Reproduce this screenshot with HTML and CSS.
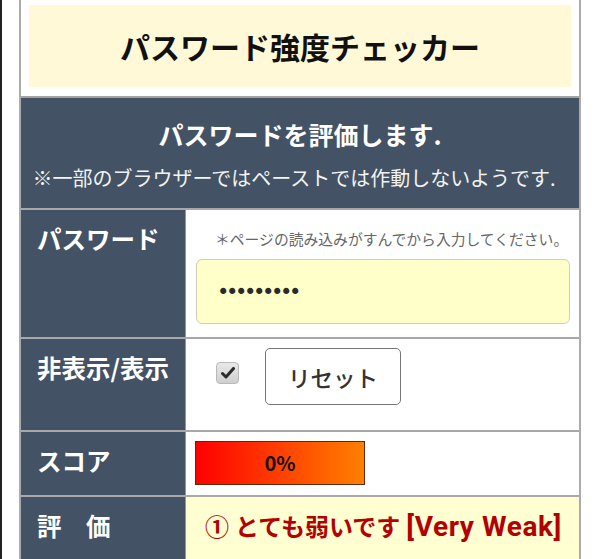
FILE: index.html
```html
<!DOCTYPE html>
<html lang="ja">
<head>
<meta charset="UTF-8">
<meta name="viewport" content="width=device-width, initial-scale=1.0">
<title>パスワード強度チェッカー</title>
<link rel="stylesheet" href="styles.css">
</head>
<body>
    <div class="checker">
        <div class="checker-head">
            <h1>パスワード強度チェッカー</h1>
        </div>
        <div class="intro">
            <h2>パスワードを評価します.</h2>
            <p>※一部のブラウザーではペーストでは作動しないようです.</p>
        </div>

        <div class="row row-pass">
            <div class="label">パスワード</div>
            <div class="cell">
                <div class="hint">＊ページの読み込みがすんでから入力してください。</div>
                <input type="password" class="pass-input" id="passInput" value="password1" autocomplete="off">
            </div>
        </div>
        <div class="row row-toggle">
            <div class="label">非表示/表示</div>
            <div class="cell">
                <span class="check" id="toggle">
                    <svg width="14" height="12" viewBox="0 0 14 12"><path d="M1.5 6.5 L5 10 L12.5 1.5" fill="none" stroke="#2b2b2b" stroke-width="3" stroke-linecap="round" stroke-linejoin="round"/></svg>
                </span>
                <button class="reset-btn" id="resetBtn">リセット</button>
            </div>
        </div>
        <div class="row row-score">
            <div class="label">スコア</div>
            <div class="cell">
                <div class="score-bar" id="scoreBar">0%</div>
            </div>
        </div>
        <div class="row row-rank">
            <div class="label">評　価</div>
            <div class="cell rank" id="rank">① とても弱いです <span class="rank-en">[Very Weak]</span></div>
        </div>
    </div>
</body>
</html>
```

FILE: styles.css
```css
body {
    margin: 0;
    min-height: 559px;
    border-left: 2px solid #222;
    background-color: #fff;
    font-family: "Noto Sans CJK JP", sans-serif;
}
.checker {
    width: 558px;
    margin-left: 17px;
    border: 2px solid #ababab;
    border-top: none;
}
.checker-head {
    padding: 5px 8px 9px;
}
.checker-head h1 {
    margin: 0;
    height: 82px;
    display: flex;
    align-items: center;
    justify-content: center;
    background-color: #fff9d7;
    color: #111;
    font-size: 30px;
    font-weight: bold;
}
.intro {
    box-sizing: border-box;
    height: 112px;
    padding-top: 18px;
    border-top: 2px solid #a3a3a3;
    background-color: #435264;
    color: #fff;
    text-align: center;
}
.intro h2 {
    margin: 0;
    font-size: 25px;
    line-height: 36px;
    font-weight: bold;
}
.intro p {
    margin: 12px 0 0;
    padding-right: 12px;
    font-size: 20px;
    line-height: 28px;
    color: #f2f2f2;
}
.row {
    display: grid;
    grid-template-columns: 164px 1fr;
    border-top: 2px solid #a8a8a8;
}
.label {
    padding: 11px 0 0 16px;
    background-color: #435264;
    color: #fff;
    font-size: 24.5px;
    font-weight: bold;
    line-height: 36px;
}
.cell {
    border-left: 1px solid #8e98a3;
    background-color: #fff;
}
.row-pass {
    height: 127px;
}
.row-pass .cell {
    padding: 18px 9px 0 10px;
}
.hint {
    padding-left: 19px;
    font-size: 14.8px;
    line-height: 22px;
    color: #666;
}
.pass-input {
    display: block;
    box-sizing: border-box;
    width: 100%;
    height: 65px;
    margin-top: 9px;
    padding: 0 0 0 20px;
    border: 1px solid #cfcfb8;
    border-radius: 6px;
    background-color: #ffffca;
    color: #2a2a2a;
    font-family: "DejaVu Sans", sans-serif;
    font-size: 21px;
    letter-spacing: -3.4px;
    outline: none;
}
.row-toggle {
    height: 91px;
}
.row-toggle .cell {
    display: flex;
    align-items: flex-start;
    gap: 26px;
    padding: 9px 0 0 30px;
}
.check {
    box-sizing: border-box;
    width: 23px;
    height: 22px;
    margin-top: 14px;
    display: flex;
    align-items: center;
    justify-content: center;
    border: 1px solid #b9b9b9;
    border-radius: 4px;
    background: linear-gradient(#e9e9e9, #cfcfcf);
}
.reset-btn {
    width: 136px;
    height: 57px;
    border: 1px solid #777;
    border-radius: 5px;
    background-color: #fff;
    color: #333;
    font-family: "Noto Sans CJK JP", sans-serif;
    font-size: 22.5px;
    font-weight: 500;
}
.row-score {
    height: 63px;
}
.row-score .cell {
    padding: 9px 0 0 9px;
}
.score-bar {
    box-sizing: border-box;
    width: 170px;
    height: 44px;
    border: 1px solid #5a2a0c;
    background: linear-gradient(to right, #ff0000, #ff8000);
    color: #111;
    font-size: 20px;
    font-weight: bold;
    line-height: 42px;
    text-align: center;
}
.row-rank {
    height: 70px;
}
.rank {
    padding: 12px 0 0 19px;
    background-color: #ffffd2;
    color: #b30000;
    font-family: Roboto, "Noto Sans CJK JP", sans-serif;
    font-size: 24px;
    font-weight: bold;
    line-height: 36px;
    white-space: nowrap;
}
.rank-en {
    font-size: 28px;
    letter-spacing: 0.6px;
}
```
